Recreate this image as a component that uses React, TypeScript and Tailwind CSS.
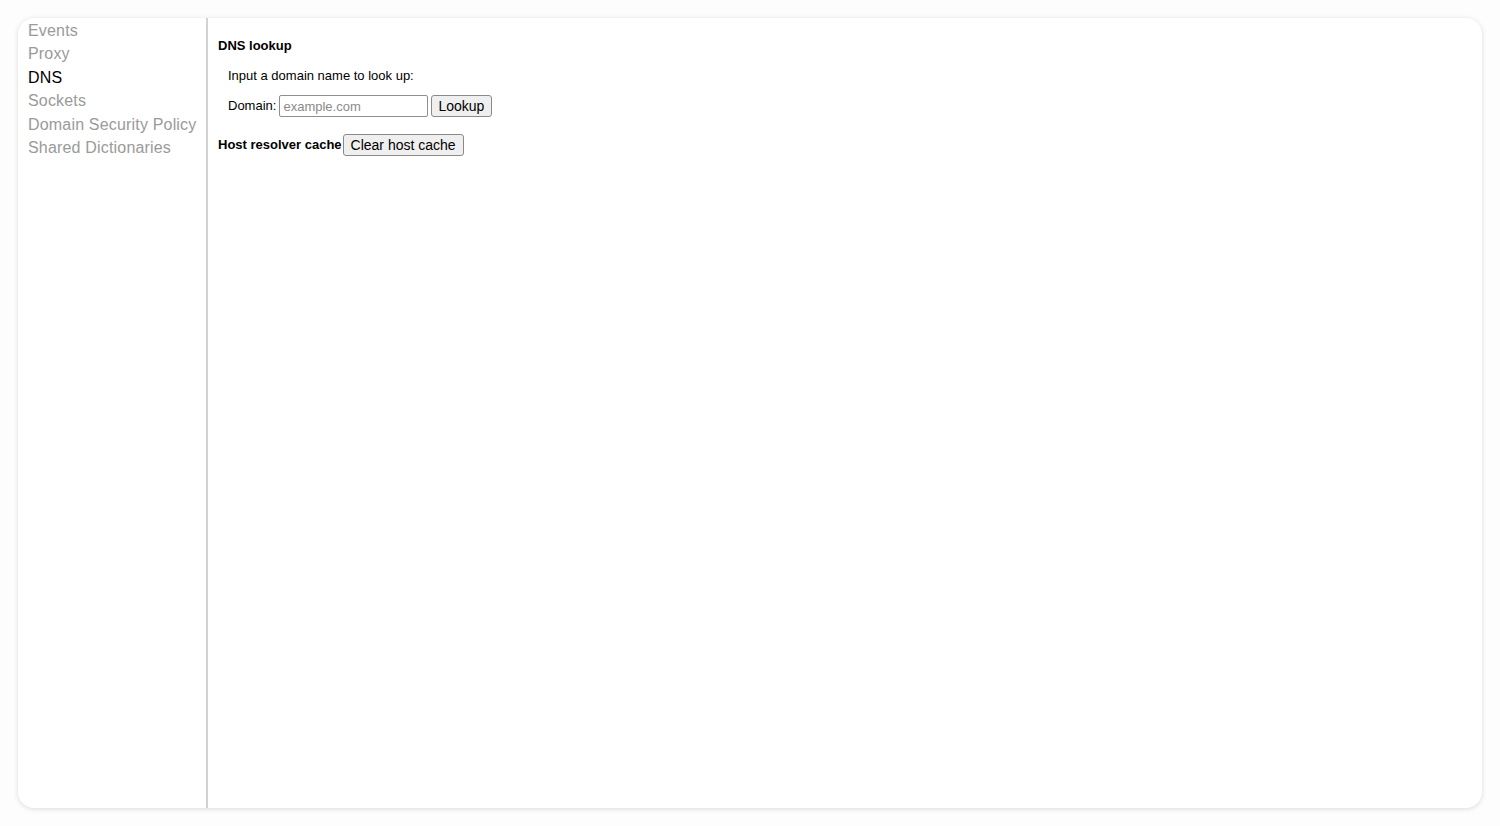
import React, { useState } from 'react'

const tabs = ['Events', 'Proxy', 'DNS', 'Sockets', 'Domain Security Policy', 'Shared Dictionaries']

const App = () => {
  const [active, setActive] = useState<string>('DNS')
  const [domain, setDomain] = useState<string>('')

  return (
    <div className="h-screen w-full bg-[#fdfdfd] p-[18px] font-['Liberation_Sans',Arial,sans-serif]">
      <div className="flex h-full overflow-hidden rounded-2xl bg-white shadow-[0_1px_5px_rgba(0,0,0,0.14)]">
        {/* sidebar */}
        <div className="w-[190px] shrink-0 border-r-2 border-[#d2d2d2] pl-[10px] pt-[1px]">
          {tabs.map((tab) => (
            <div
              key={tab}
              onClick={() => setActive(tab)}
              className={`cursor-pointer text-[16px] leading-[23.4px] tracking-[0.18px] ${
                active === tab ? 'text-black' : 'text-[#9a9a9a]'
              }`}
            >
              {tab}
            </div>
          ))}
        </div>

        {/* content */}
        <div className="flex-1 pl-[10px] pt-[20px] text-[13px] text-black">
          <h4 className="font-bold leading-[16px]">DNS lookup</h4>
          <div className="ml-[10px] mt-[14px]">
            <p className="leading-[16px]">Input a domain name to look up:</p>
            <form
              className="mt-[11px] flex items-center"
              onSubmit={(e) => e.preventDefault()}
            >
              <label className="mr-[3px]">Domain:</label>
              <input
                value={domain}
                onChange={(e) => setDomain(e.target.value)}
                placeholder="example.com"
                className="h-[22px] w-[149px] rounded-[2px] border border-[#8f8f8f] px-[3px] text-[13px] placeholder:text-[#8a8a8a]"
              />
              <button
                type="submit"
                className="ml-[3px] h-[22px] rounded-[3px] border border-[#8a8a8a] bg-[#efefef] pl-[6px] pr-[7px] text-[14px] leading-[18px]"
              >
                Lookup
              </button>
            </form>
          </div>
          <div className="mt-[17px] flex items-center">
            <span className="mr-[1px] font-bold">Host resolver cache</span>
            <button className="h-[22px] rounded-[3px] border border-[#8a8a8a] bg-[#efefef] px-[7px] text-[14px] leading-[18px]">
              Clear host cache
            </button>
          </div>
        </div>
      </div>
    </div>
  )
}

export default App
